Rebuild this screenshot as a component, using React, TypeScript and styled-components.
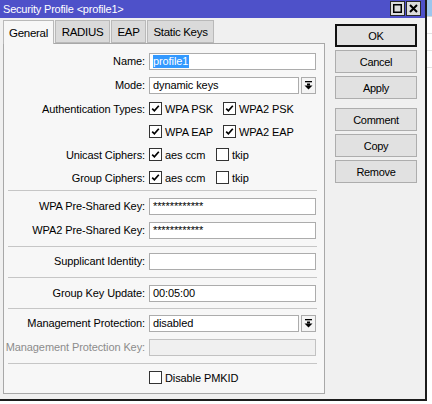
import React from 'react';
import styled, {createGlobalStyle} from "styled-components";

const GlobalStyle = createGlobalStyle`
  html, body {
    margin: 0;
    padding: 0;
    background: #ffffff;
  }
  body {
    font-family: "Liberation Sans", Arial, sans-serif;
    font-size: 11px;
    letter-spacing: -0.1px;
    color: #000;
  }
`

const Page = styled.div`
  display: flex;
  align-items: flex-start;
  width: 432px;
  height: 404px;
  overflow: hidden;
`

const Window = styled.div`
  width: 425px;
  height: 399px;
  flex-shrink: 0;
  display: flex;
  flex-direction: column;
  background: #f0f0f0;
  border-right: 2px solid #1c1c1c;
  border-bottom: 2px solid #1c1c1c;
`

const TitleBar = styled.div`
  height: 18px;
  display: flex;
  align-items: center;
  padding: 0 4px 0 3px;
  background: #4e51c9;
  color: #fff;
  font-size: 11px;
  letter-spacing: -0.2px;
`

const Title = styled.div`
  flex: 1;
  line-height: 18px;
`

const TitleButton = styled.div`
  width: 13px;
  height: 13px;
  margin-top: -2px;
  border: 1px solid #2a2a2a;
  background: #dcdcdc;
  display: flex;
  align-items: center;
  justify-content: center;
`

const Body = styled.div`
  display: flex;
  padding: 2px 0 0 3px;
  gap: 10px;
`

const TabsColumn = styled.div`
  width: 322px;
  display: flex;
  flex-direction: column;
`

const TabStrip = styled.div`
  display: flex;
  height: 24px;
  gap: 1px;
`

const Tab = styled.div<{ $w: number; $active?: boolean }>`
  width: ${props => props.$w}px;
  height: ${props => props.$active ? 24 : 23}px;
  box-sizing: border-box;
  border: 1px solid #b9b9b9;
  border-bottom: ${props => props.$active ? 'none' : '1px solid #b9b9b9'};
  background: ${props => props.$active ? '#f7f7f7' : '#dadada'};
  display: flex;
  align-items: center;
  justify-content: center;
  font-size: 11.5px;
  letter-spacing: -0.3px;
  position: relative;
  z-index: ${props => props.$active ? 2 : 1};
`

const Panel = styled.div`
  height: 351px;
  margin-top: -1px;
  box-sizing: border-box;
  border: 1px solid #a8a8a8;
  background: #f7f7f7;
  padding: 5px 7px 0 0;
  display: flex;
  flex-direction: column;
`

const Row = styled.div<{ $h?: number }>`
  height: ${props => props.$h || 24}px;
  display: flex;
  align-items: center;
`

const Label = styled.div<{ $disabled?: boolean }>`
  width: 141px;
  margin-right: 4px;
  text-align: right;
  white-space: nowrap;
  color: ${props => props.$disabled ? '#8c8c8c' : '#000'};
`

const Field = styled.div<{ $disabled?: boolean }>`
  width: 167px;
  height: 17px;
  box-sizing: border-box;
  border: 1px solid ${props => props.$disabled ? '#c2c2c2' : '#acacac'};
  background: ${props => props.$disabled ? '#f0f0f0' : '#fff'};
  padding-left: 3px;
  display: flex;
  align-items: center;
  white-space: nowrap;
  overflow: hidden;
`

const Selected = styled.span`
  background: #3399ff;
  color: #fff;
  line-height: 13px;
  padding: 0 1px 0 0;
`

const Combo = styled.div`
  width: 167px;
  display: flex;
  gap: 2px;
`

const ComboText = styled(Field)`
  width: 150px;
`

const ComboButton = styled.div`
  width: 15px;
  height: 17px;
  box-sizing: border-box;
  border: 1px solid #acacac;
  background: #f4f4f4;
  display: flex;
  align-items: center;
  justify-content: center;
`

const Checks = styled.div`
  display: flex;
`

const CheckItem = styled.div<{ $w: number }>`
  width: ${props => props.$w}px;
  display: flex;
  align-items: center;
  gap: 3px;
  white-space: nowrap;
`

const Box = styled.div`
  width: 13px;
  height: 13px;
  box-sizing: border-box;
  border: 1px solid #333;
  background: #fff;
  display: flex;
  align-items: center;
  justify-content: center;
`

const Divider = styled.div<{ $top: number; $bottom: number }>`
  height: 1px;
  margin: ${props => props.$top}px 0 ${props => props.$bottom}px 4px;
  background: #c6c6c6;
`

const Buttons = styled.div`
  width: 82px;
  margin-top: 4px;
  display: flex;
  flex-direction: column;
  gap: 3px;
`

const Button = styled.div<{ $default?: boolean; $gapBefore?: number }>`
  height: 23px;
  box-sizing: border-box;
  border: 1px solid ${props => props.$default ? '#111' : '#adadad'};
  box-shadow: ${props => props.$default ? 'inset 0 0 0 1px #111' : 'none'};
  background: #e1e1e1;
  margin-top: ${props => props.$gapBefore || 0}px;
  display: flex;
  align-items: center;
  justify-content: center;
  font-size: 11px;
  letter-spacing: -0.3px;
`

const Backdrop = styled.div`
  flex: 1;
  display: flex;
  flex-direction: column;
`

const BackHead = styled.div`
  height: 16px;
  background: #9cc6ee;
  border-bottom: 1px solid #d6d6d6;
`

const BackRow = styled.div`
  height: 16px;
  border-bottom: 1px solid #e2e2e2;
`

const DropIcon = () => (
    <svg width="9" height="9" viewBox="0 0 9 9">
        <rect x="1" y="0" width="7" height="1.3" fill="#000"/>
        <rect x="3" y="2.5" width="3" height="2" fill="#000"/>
        <polygon points="0.5,4.5 8.5,4.5 4.5,8.5" fill="#000"/>
    </svg>
)

const Check = (props: { checked?: boolean }) => (
    <Box>
        {props.checked &&
        <svg width="11" height="11" viewBox="0 0 11 11">
            <path d="M2.2 5.6 L4.4 7.8 L8.8 2.8" stroke="#000" strokeWidth="1.7" fill="none"/>
        </svg>}
    </Box>
)

type CheckProps = { label: string, checked?: boolean, w: number }
const CheckOption = (props: CheckProps) => (
    <CheckItem $w={props.w}>
        <Check checked={props.checked}/>
        <span>{props.label}</span>
    </CheckItem>
)

const App = () => {
    return (
        <Page>
            <GlobalStyle/>
            <Window>
                <TitleBar>
                    <Title>Security Profile &lt;profile1&gt;</Title>
                    <TitleButton>
                        <svg width="9" height="9" viewBox="0 0 9 9">
                            <rect x="0.75" y="0.75" width="7.5" height="7.5" stroke="#000" strokeWidth="1.5" fill="none"/>
                        </svg>
                    </TitleButton>
                    <TitleButton style={{marginLeft: 1}}>
                        <svg width="9" height="9" viewBox="0 0 9 9">
                            <path d="M1 1 L8 8 M8 1 L1 8" stroke="#000" strokeWidth="2"/>
                        </svg>
                    </TitleButton>
                </TitleBar>
                <Body>
                    <TabsColumn>
                        <TabStrip>
                            <Tab $w={51} $active>General</Tab>
                            <Tab $w={55}>RADIUS</Tab>
                            <Tab $w={35}>EAP</Tab>
                            <Tab $w={67}>Static Keys</Tab>
                        </TabStrip>
                        <Panel>
                            <Row>
                                <Label>Name:</Label>
                                <Field><Selected>profile1</Selected></Field>
                            </Row>
                            <Row>
                                <Label>Mode:</Label>
                                <Combo>
                                    <ComboText>dynamic keys</ComboText>
                                    <ComboButton><DropIcon/></ComboButton>
                                </Combo>
                            </Row>
                            <Row $h={23}>
                                <Label>Authentication Types:</Label>
                                <Checks>
                                    <CheckOption w={74} label="WPA PSK" checked/>
                                    <CheckOption w={80} label="WPA2 PSK" checked/>
                                </Checks>
                            </Row>
                            <Row $h={23}>
                                <Label/>
                                <Checks>
                                    <CheckOption w={74} label="WPA EAP" checked/>
                                    <CheckOption w={80} label="WPA2 EAP" checked/>
                                </Checks>
                            </Row>
                            <Row $h={23}>
                                <Label>Unicast Ciphers:</Label>
                                <Checks>
                                    <CheckOption w={67} label="aes ccm" checked/>
                                    <CheckOption w={60} label="tkip"/>
                                </Checks>
                            </Row>
                            <Row $h={23}>
                                <Label>Group Ciphers:</Label>
                                <Checks>
                                    <CheckOption w={67} label="aes ccm" checked/>
                                    <CheckOption w={60} label="tkip"/>
                                </Checks>
                            </Row>
                            <Divider $top={1} $bottom={3}/>
                            <Row>
                                <Label>WPA Pre-Shared Key:</Label>
                                <Field>************</Field>
                            </Row>
                            <Row>
                                <Label>WPA2 Pre-Shared Key:</Label>
                                <Field>************</Field>
                            </Row>
                            <Divider $top={4} $bottom={2}/>
                            <Row>
                                <Label>Supplicant Identity:</Label>
                                <Field/>
                            </Row>
                            <Divider $top={4} $bottom={3}/>
                            <Row>
                                <Label>Group Key Update:</Label>
                                <Field>00:05:00</Field>
                            </Row>
                            <Divider $top={3} $bottom={2}/>
                            <Row>
                                <Label>Management Protection:</Label>
                                <Combo>
                                    <ComboText>disabled</ComboText>
                                    <ComboButton><DropIcon/></ComboButton>
                                </Combo>
                            </Row>
                            <Row>
                                <Label $disabled>Management Protection Key:</Label>
                                <Field $disabled/>
                            </Row>
                            <Divider $top={4} $bottom={2}/>
                            <Row $h={23}>
                                <Label/>
                                <Checks>
                                    <CheckOption w={120} label="Disable PMKID"/>
                                </Checks>
                            </Row>
                        </Panel>
                    </TabsColumn>
                    <Buttons>
                        <Button $default>OK</Button>
                        <Button>Cancel</Button>
                        <Button>Apply</Button>
                        <Button $gapBefore={6}>Comment</Button>
                        <Button>Copy</Button>
                        <Button>Remove</Button>
                    </Buttons>
                </Body>
            </Window>
            <Backdrop>
                <BackHead/>
                <BackRow/>
                <BackRow/>
                <BackRow/>
            </Backdrop>
        </Page>
    );
};

export default App;
